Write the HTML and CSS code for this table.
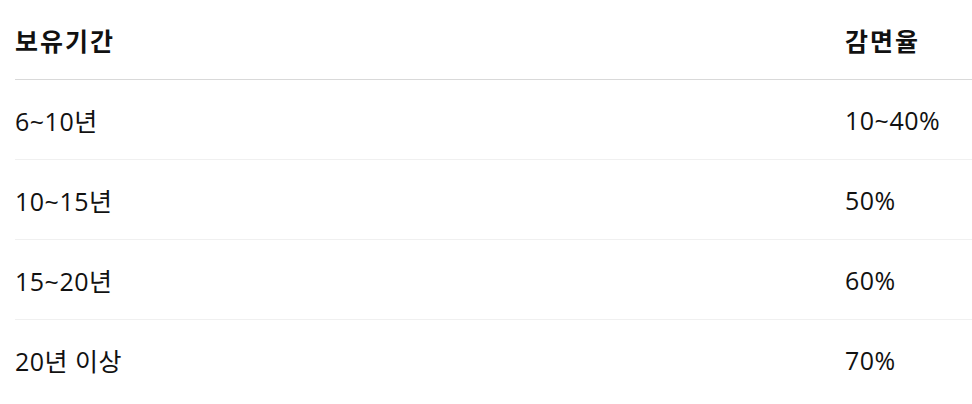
FILE: index.html
```html
<!DOCTYPE html>
<html lang="ko">
<head>
    <meta charset="UTF-8">
    <meta name="viewport" content="width=device-width, initial-scale=1.0">
    <title>보유기간별 감면율</title>
    <link rel="stylesheet" href="styles.css">
</head>
<body>
    <table class="rate-table">
        <thead>
            <tr>
                <th class="col-period">보유기간</th>
                <th>감면율</th>
            </tr>
        </thead>
        <tbody>
            <tr>
                <td>6~10년</td>
                <td>10~40%</td>
            </tr>
            <tr>
                <td>10~15년</td>
                <td>50%</td>
            </tr>
            <tr>
                <td>15~20년</td>
                <td>60%</td>
            </tr>
            <tr>
                <td>20년 이상</td>
                <td>70%</td>
            </tr>
        </tbody>
    </table>
</body>
</html>
```

FILE: styles.css
```css
body {
    margin: 0;
    padding: 0 0 0 15px;
    background-color: #fff;
    font-family: "Open Sans", "Noto Sans CJK KR", sans-serif;
    color: #111;
}
.rate-table {
    width: 957px;
    border-collapse: collapse;
}
.rate-table th,
.rate-table td {
    padding: 0;
    text-align: left;
    font-size: 25px;
}
.rate-table th {
    height: 79px;
    font-weight: bold;
    letter-spacing: 2px;
    border-bottom: 1px solid #d9d9d9;
}
.rate-table td {
    height: 79px;
    font-weight: normal;
    letter-spacing: 0.5px;
    border-bottom: 1px solid #f0f0f0;
}
.rate-table tbody tr:last-child td {
    border-bottom: none;
}
.col-period {
    width: 830px;
}
```
